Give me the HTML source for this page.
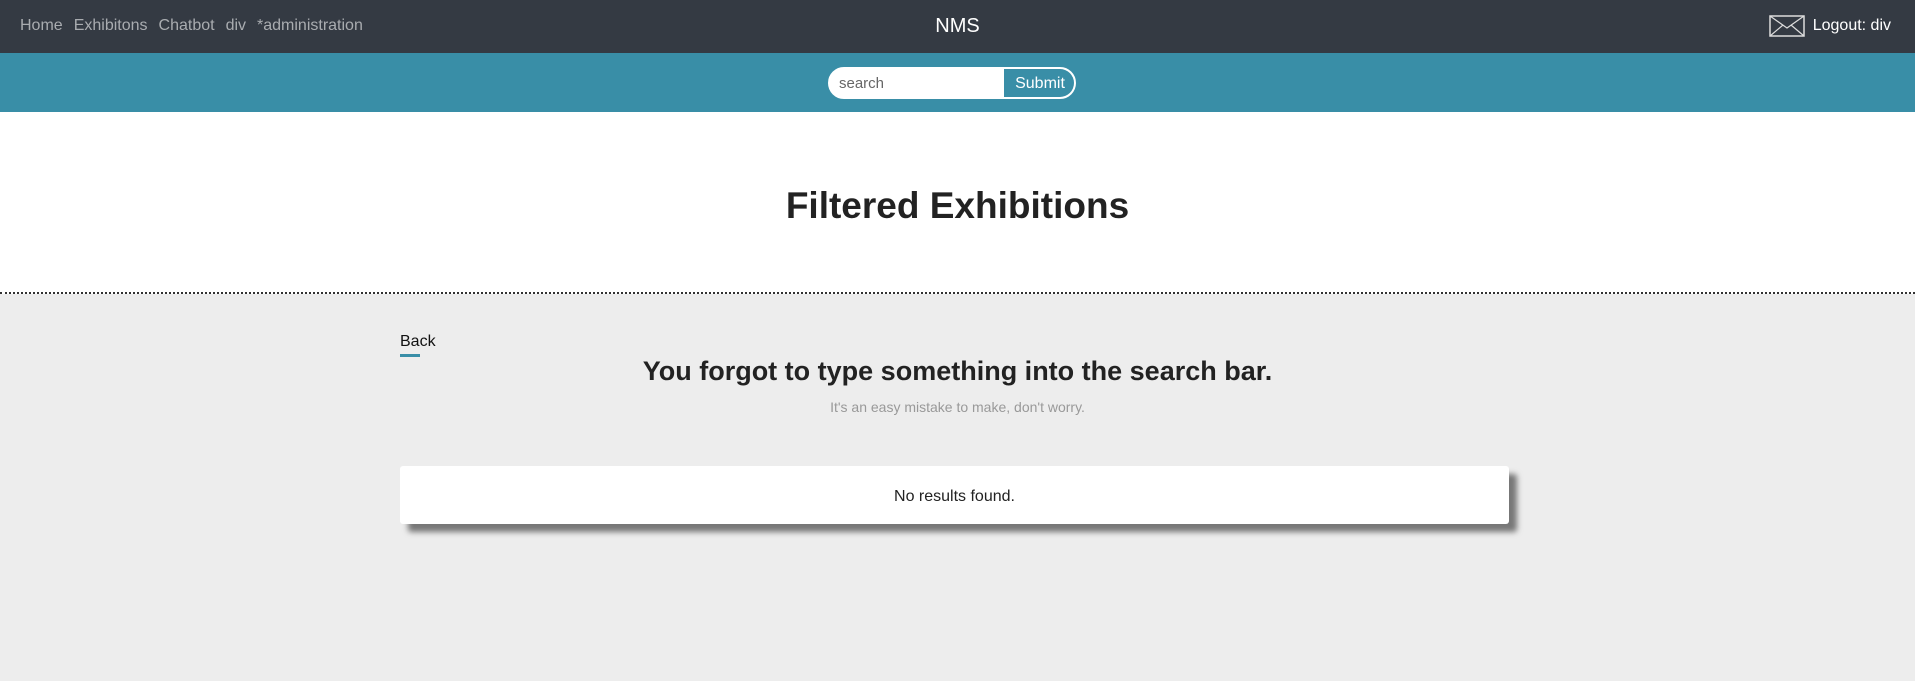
<!DOCTYPE html>
<html><head><style>
*{margin:0;padding:0;box-sizing:border-box}
body{width:1915px;height:681px;overflow:hidden;background:#ededed;font-family:"Segoe UI","Liberation Sans",sans-serif}
.nav{height:53px;background:#343a43;position:relative;color:#fff}
.nav .l{position:absolute;left:20px;top:17px;font-size:16px;color:#a9acb0}
.nav .l span{margin-right:11px}
.nav .c{position:absolute;left:0;right:0;text-align:center;top:15px;font-size:20px}
.nav .r{position:absolute;right:24px;top:15px;font-size:16px;display:flex;align-items:center}
.bar{height:59px;background:#398ea7;position:relative}
.search{position:absolute;left:828px;top:14px;width:248px;height:32px;border:2px solid #fff;border-radius:16px;background:#fff;overflow:hidden}
.search .t{position:absolute;left:9px;top:6px;font-size:15px;color:#666}
.search .b{position:absolute;left:174px;top:0;width:72px;height:28px;background:#398ea7;color:#fff;font-size:16px;text-align:center;line-height:29px}
.hero{height:182px;background:#fff;border-bottom:2px dotted #333;text-align:center}
.hero h1{font-size:37px;font-weight:600;color:#222;padding-top:73px}
.back{position:absolute;left:400px;top:333px;font-size:16px;color:#111}
.back:after{content:"";position:absolute;left:0;top:21px;width:20px;height:3px;background:#398ea7}
h2{position:absolute;left:0;right:0;top:356px;text-align:center;font-size:27px;font-weight:600;color:#222}
.sub{position:absolute;left:0;right:0;top:399px;text-align:center;font-size:14px;color:#999}
.card{position:absolute;left:400px;top:466px;width:1109px;height:58px;background:#fff;border-radius:3px;box-shadow:8px 8px 6px #777;text-align:center;line-height:62px;font-size:16px;color:#222}
</style></head><body>
<div class="nav">
<div class="l"><span>Home</span><span>Exhibitons</span><span>Chatbot</span><span>div</span><span>*administration</span></div>
<div class="c">NMS</div>
<div class="r"><svg width="36" height="22" viewBox="0 0 36 22" style="margin-right:8px"><rect x="1" y="1" width="34" height="20" fill="none" stroke="#ddd" stroke-width="1.5"/><path d="M1 1L18 13L35 1M1 21L14 10M35 21L22 10" fill="none" stroke="#ddd" stroke-width="1.2"/></svg>Logout: div</div>
</div>
<div class="bar"><div class="search"><div class="t">search</div><div class="b">Submit</div></div></div>
<div class="hero"><h1>Filtered Exhibitions</h1></div>
<div class="back">Back</div>
<h2>You forgot to type something into the search bar.</h2>
<div class="sub">It's an easy mistake to make, don't worry.</div>
<div class="card">No results found.</div>
</body></html>
